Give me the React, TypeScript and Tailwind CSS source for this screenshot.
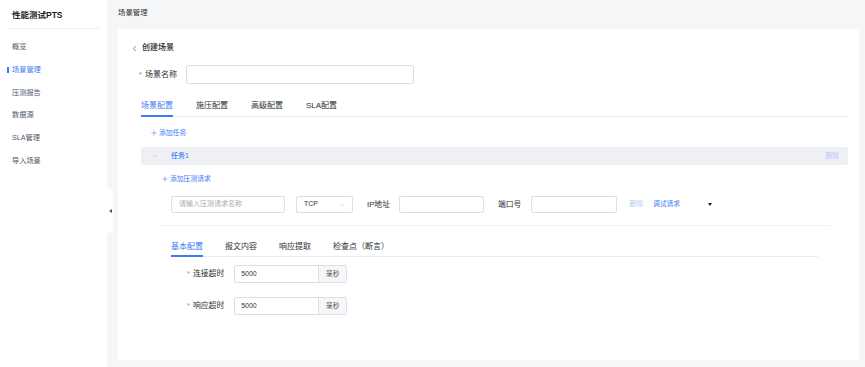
import { ChevronLeft, ChevronDown, Plus } from 'lucide-react'

const FONT = { fontFamily: '"Liberation Sans", "Noto Sans CJK SC", sans-serif' }

const MENU = ['概览', '场景管理', '压测报告', '数据源', 'SLA管理', '导入场景']

function TimeoutRow({ label, className }: { label: string; className?: string }) {
  return (
    <div className={`flex items-center h-[18px] ${className ?? ''}`}>
      <span className="ml-[46px] w-[6px] text-[8px] text-[#f56c6c] leading-none">*</span>
      <span className="text-[7.8px] text-[#2b2f36]">{label}</span>
      <div className="ml-[10px] flex h-[18px]">
        <div className="w-[85px] border border-[#dcdfe6] rounded-l-[2px] flex items-center pl-[6px] text-[7px] text-[#333]">5000</div>
        <div className="w-[28px] border border-l-0 border-[#dcdfe6] rounded-r-[2px] bg-[#f5f7fa] flex items-center justify-center text-[6.6px] text-[#555]">毫秒</div>
      </div>
    </div>
  )
}

export default function App() {
  return (
    <div className="flex w-[865px] h-[367px] overflow-hidden bg-[#f5f6f8]" style={FONT}>
      {/* Sidebar */}
      <aside className="w-[107px] shrink-0 bg-white">
        <div className="h-[28px] pt-[9px] pl-[12px] text-[8.5px] leading-[12px] font-bold text-[#1f2329]">性能测试PTS</div>
        <div className="mx-[7px] h-px bg-[#eceef1]" />
        <nav className="mt-[7px]">
          {MENU.map((m) => (
            <div key={m} className="relative h-[22.8px] flex items-center pl-[12px]">
              {m === '场景管理' && <span className="absolute left-[7px] top-[8px] w-[1.5px] h-[6px] bg-[#3b7cf6]" />}
              <span className={`text-[7.2px] ${m === '场景管理' ? 'text-[#3b7cf6]' : 'text-[#4e5969]'}`}>{m}</span>
            </div>
          ))}
        </nav>
      </aside>

      {/* Main */}
      <main className="relative flex-1 pl-[11px] pr-[3px] flex flex-col">
        {/* collapse tab */}
        <div className="absolute left-0 top-[188px] w-[6px] h-[45px] bg-white rounded-r-[4px] flex items-center justify-center">
          <span className="w-0 h-0 border-y-[2.5px] border-y-transparent border-r-[3px] border-r-[#555]" />
        </div>

        <div className="h-[29px] pt-[7px] text-[7.4px] leading-[11px] text-[#333]">场景管理</div>

        <div className="w-[741px] h-[331px] bg-white rounded-[2px] pl-[23px] pr-[11px] pt-[9px]">
          {/* back */}
          <div className="h-[20px] flex items-center -ml-[11px]">
            <ChevronLeft size={9} strokeWidth={1.6} className="text-[#333]" />
            <span className="ml-[3px] text-[8px] font-medium text-[#1f2329]">创建场景</span>
          </div>

          {/* scene name */}
          <div className="mt-[7px] h-[19px] flex items-center">
            <span className="-ml-[2px] w-[6px] text-[8px] text-[#f56c6c] leading-none">*</span>
            <span className="text-[8px] text-[#2b2f36]">场景名称</span>
            <div className="ml-[9px] w-[228px] h-[19px] border border-[#dcdfe6] rounded-[2px]" />
          </div>

          {/* tabs */}
          <div className="mt-[13px] flex gap-[23px] border-b border-[#e8eaee]">
            {['场景配置', '施压配置', '高级配置', 'SLA配置'].map((t, i) => (
              <div key={t} className={`-mb-px pb-[3px] pt-[3px] text-[8px] leading-[12px] border-b-2 ${i === 0 ? 'text-[#3b7cf6] border-[#3b7cf6]' : 'text-[#2b2f36] border-transparent'}`}>{t}</div>
            ))}
          </div>

          {/* add task */}
          <div className="mt-[10px] h-[12px] flex items-center pl-[9px] text-[#3b7cf6]">
            <Plus size={8} strokeWidth={1.5} />
            <span className="ml-[1px] text-[6.8px]">添加任务</span>
          </div>

          {/* task row */}
          <div className="mt-[8px] h-[18px] bg-[#eef0f4] rounded-[2px] flex items-center pl-[10px] pr-[9px]">
            <ChevronDown size={8} strokeWidth={1.3} className="text-[#b8bcc4]" />
            <span className="ml-[12px] text-[7px] font-medium text-[#3b7cf6]">任务1</span>
            <span className="ml-auto text-[6.8px] text-[#b5cbf8]">删除</span>
          </div>

          {/* request section */}
          <div className="pl-[19px] pr-[18px]">
            <div className="mt-[8px] h-[12px] flex items-center pl-[1px] text-[#3b7cf6]">
              <Plus size={8} strokeWidth={1.5} />
              <span className="ml-[1px] text-[6.8px]">添加压测请求</span>
            </div>

            <div className="mt-[11px] h-[17px] flex items-center pl-[11px]">
              <div className="w-[114px] h-[17px] border border-[#dcdfe6] rounded-[2px] flex items-center pl-[7px] text-[7px] text-[#a8abb2]">请输入压测请求名称</div>
              <div className="ml-[11px] w-[57px] h-[17px] border border-[#dcdfe6] rounded-[2px] flex items-center pl-[7px] pr-[6px] text-[7px] text-[#333]">
                TCP
                <ChevronDown size={8} strokeWidth={1.2} className="ml-auto text-[#b8bcc4]" />
              </div>
              <span className="ml-[14px] text-[7.8px] text-[#2b2f36]">IP地址</span>
              <div className="ml-[9px] w-[85px] h-[17px] border border-[#dcdfe6] rounded-[2px]" />
              <span className="ml-[14px] text-[7.8px] text-[#2b2f36]">端口号</span>
              <div className="ml-[10px] w-[86px] h-[17px] border border-[#dcdfe6] rounded-[2px]" />
              <span className="ml-[12px] text-[6.8px] text-[#b5cbf8]">删除</span>
              <span className="ml-[10px] text-[6.8px] text-[#3b7cf6]">调试请求</span>
              <span className="ml-[28px] w-0 h-0 border-x-[2.5px] border-x-transparent border-t-[3px] border-t-[#222]" />
            </div>

            <div className="mt-[12px] h-px bg-[#f0f1f3]" />

            {/* sub tabs */}
            <div className="ml-[11px] mr-[12px] mt-[15px] flex gap-[22px] border-b border-[#e8eaee]">
              {['基本配置', '报文内容', '响应提取', '检查点（断言）'].map((t, i) => (
                <div key={t} className={`-mb-px pb-[2px] text-[8px] leading-[12px] border-b-2 ${i === 0 ? 'text-[#3b7cf6] border-[#3b7cf6]' : 'text-[#2b2f36] border-transparent'}`}>{t}</div>
              ))}
            </div>
          </div>

          <TimeoutRow label="连接超时" className="mt-[8px]" />
          <TimeoutRow label="响应超时" className="mt-[14px]" />
        </div>
      </main>
    </div>
  )
}
